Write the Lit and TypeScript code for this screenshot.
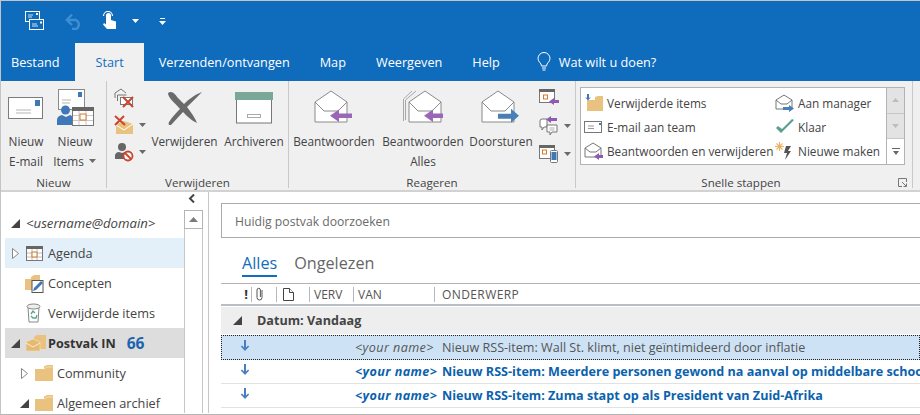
import {html, css, svg, LitElement} from 'lit';
import {customElement} from 'lit/decorators.js';

const caret = html`<svg class="caret" width="8" height="4" viewBox="0 0 8 4"><path d="M0 0h7L3.5 4z" fill="#6a6a6a"/></svg>`;

const folder = (w = 18, h = 16) => svg`<svg width=${w} height=${h} viewBox="0 0 18 16"><path d="M0 4h9V1.500L12 0h6v16H0z" fill="#eac27f"/><path d="M9 4l3-2h6" fill="none" stroke="#f6e3bf" stroke-width=".8"/></svg>`;

const openEnv = (arrow: string, dir: 'l' | 'r', double = false) => html`<svg width="40" height="36" viewBox="0 0 40 36">
  ${double ? svg`<path d="M0.500 31V9L9 1" fill="none" stroke="#a8a8a8"/><path d="M2.500 30V10L13 1" fill="none" stroke="#a8a8a8"/>` : ''}
  <g transform=${double ? 'translate(5 0)' : ''}>
    <path d="M1 12L17 1l16 11v20H1z" fill="#fff" stroke="#8a8a8a"/>
    <path d="M1 12l9 9h14l9-9" fill="none" stroke="#8a8a8a"/>
    ${dir === 'l'
      ? svg`<path d="M18 28h20v-4.500H25v-4l-9 6.250 9 6.250v-4z" fill=${arrow}/>`
      : svg`<path d="M38 25.750l-8-7v5H17v5h13v4z" fill=${arrow}/>`}
  </g>
</svg>`;

const smallEnv = (arrow: string, dir: 'l' | 'r') => html`<svg width="20" height="19" viewBox="0 0 20 19">
  <path d="M1 6l8-5 8 5v9H1z" fill="#fff" stroke="#777"/><path d="M1 6l5 4h6l5-4" fill="none" stroke="#777"/>
  ${dir === 'l'
    ? svg`<path d="M10 14.500l5-3.500v2h4v3h-4v2z" fill=${arrow}/>`
    : svg`<path d="M19 14.500l-5-3.500v2H8v3h6v2z" fill=${arrow}/>`}
</svg>`;

const calendar = html`<svg width="17" height="15" viewBox="0 0 17 15"><rect x=".5" y=".5" width="16" height="14" fill="#fff" stroke="#777"/><rect x="0" y="0" width="17" height="3" fill="#666"/><path d="M6 3v11M11 3v11M1 7h15M1 11h15" stroke="#bbb"/><rect x="6" y="6" width="5" height="5" fill="#fff" stroke="#d8792a"/></svg>`;

const downArrow = html`<svg width="10" height="12" viewBox="0 0 10 12"><path d="M5 11L.8 6.500l1.200-1L4 7.500V0h2v7.500l2-2 1.200 1z" fill="#4a7fbf"/></svg>`;

const triOpen = html`<svg class="tri" width="9" height="9" viewBox="0 0 9 9"><path d="M9 0v9H0z" fill="#444"/></svg>`;
const triClosed = html`<svg class="tri" width="7" height="11" viewBox="0 0 7 11"><path d="M.5.500l6 5-6 5z" fill="#fff" stroke="#888"/></svg>`;

@customElement('app-root')
export class AppRoot extends LitElement {
  static styles = css`
    :host {
      display: block;
      width: 920px;
      height: 415px;
      overflow: hidden;
      background: #fff;
      font-family: "Open Sans", "Noto Sans", sans-serif;
      font-size: 13px;
      color: #444;
      box-sizing: border-box;
      border-left: 1px solid #c4c4c4;
      border-top: 1px solid #c4c4c4;
      border-bottom: 1px solid #b5b5b5;
    }
    svg { display: block; flex: none; }

    /* title + tabs */
    .top { background: #0f6cbd; height: 80px; display: flex; flex-direction: column; }
    .qat { height: 42px; display: flex; align-items: center; padding: 0 0 2px 24px; box-sizing: border-box; }
    .qat .undo { margin-left: 20px; }
    .qat .touch { margin-left: 19px; }
    .qat .drop { margin-left: 15px; }
    .qat .more { margin-left: 20px; }
    .tabs { height: 38px; display: flex; color: #fff; font-size: 12.7px; }
    .tab { padding: 0 15px; display: flex; align-items: center; white-space: nowrap; }
    .tab.file { padding: 0 16px 0 10px; }
    .tab.on { background: #f0f0f0; color: #106ebe; padding: 0 20px; }
    .tell { display: flex; align-items: center; gap: 7px; margin-left: 21px; }

    /* ribbon */
    .ribbon { height: 111px; background: #f0f0f0; border-bottom: 2px solid #d2d2d2; display: flex; box-sizing: border-box; }
    .group { display: flex; flex-direction: column; flex: none; padding-top: 4px; box-sizing: border-box; border-right: 1px solid #c8c8c8; margin-bottom: 2px; }
    .g1 { width: 106px; }
    .g2 { width: 182px; }
    .g3 { width: 287px; }
    .g4 { flex: 1; margin-right: 7px; position: relative; }
    .btns { flex: 1; display: flex; }
    .g1 .btns { padding-left: 4px; gap: 4px; }
    .g2 .btns { padding-left: 7px; }
    .g3 .btns { padding-left: 4px; }
    .big { display: flex; flex-direction: column; align-items: center; line-height: 20px; white-space: nowrap; font-size: 11.8px; }
    .big .ico { height: 46px; display: flex; align-items: center; justify-content: center; }
    .big .ln { display: flex; align-items: center; gap: 5px; }
    .glabel { height: 10px; text-align: center; line-height: 10px; font-size: 11.6px; }
    .stack { display: flex; flex-direction: column; gap: 7px; padding-top: 3px; }
    .stack .it { display: flex; align-items: center; gap: 5px; height: 20px; }
    .g2 .stack { width: 34px; }
    .g3 .stack { margin-left: 7px; gap: 8px; }

    .steps { display: flex; margin: 2px 0 0 4px; height: 78px; width: 325px; flex: none; }
    .steps .box { flex: 1; border: 1px solid #b3b3b3; background: #fff; display: grid; grid-template-columns: 191px 1fr; grid-auto-rows: 24px; padding: 3px 0 0 3px; box-sizing: border-box; font-size: 11.8px; }
    .step { display: flex; align-items: center; gap: 3px; white-space: nowrap; }
    .scroll3 { width: 18px; display: flex; flex-direction: column; border: 1px solid #b3b3b3; border-left: none; box-sizing: border-box; }
    .scroll3 div { flex: 1; display: flex; align-items: center; justify-content: center; background: #e3e3e3; border-bottom: 1px solid #c8c8c8; }
    .scroll3 div:last-child { background: #fff; border-bottom: none; }
    .g4 .glabel { padding-right: 6px; }
    .launcher { position: absolute; right: 5px; bottom: 1px; }

    /* body */
    .body { display: flex; height: 221px; }
    .nav { width: 183px; flex: none; padding: 16px 0 0 4px; box-sizing: border-box; }
    .row { height: 30px; display: flex; align-items: center; font-size: 12.7px; white-space: nowrap; }
    .row .tw { width: 21px; display: flex; justify-content: center; flex: none; }
    .row.sub { padding-left: 9px; }
    .row .label { margin-left: 4px; }
    .row.plain { padding-left: 20px; }
    .row.agenda { background: #e3f0f9; }
    .row.agenda .label { margin-left: 5px; }
    .row.inbox { background: #dddddd; color: #333; font-weight: 700; font-size: 12.6px; }
    .row.inbox .label { margin-left: 2px; }
    .row.inbox .n { color: #1b63ae; margin-left: 11px; font-size: 15.5px; }
    .row.acct { font-style: italic; font-size: 13.2px; }
    .sbar { width: 25px; flex: none; display: flex; flex-direction: column; align-items: flex-start; border-right: 1px solid #c6c6c6; box-sizing: border-box; }
    .sbar .chev { height: 16px; margin: 2px 0 0 4px; }
    .sbar .up { width: 19px; height: 19px; border: 1px solid #b5b5b5; box-sizing: border-box; display: flex; align-items: center; justify-content: center; margin-top: 0; }
    .sbar .track { width: 19px; flex: 1; border: 1px solid #c6c6c6; border-top: none; border-bottom: none; box-sizing: border-box; }

    .main { flex: 1; min-width: 0; padding: 11px 0 0 12px; }
    .search { height: 35px; border: 1px solid #ababab; border-right: none; display: flex; align-items: center; padding: 1px 0 0 13px; color: #6a6a6a; font-size: 12.2px; box-sizing: border-box; }
    .views { display: flex; gap: 17px; height: 46px; padding: 14px 0 0 21px; box-sizing: border-box; font-size: 16.2px; color: #666; border-bottom: 1px solid #b4b4b4; }
    .views span { height: 25px; line-height: 22px; }
    .views .on { color: #106ebe; border-bottom: 2px solid #106ebe; box-sizing: border-box; }
    .cols { display: grid; grid-template-columns: 31px 25px 33px 44px 81px 1fr; height: 20px; align-items: center; font-size: 12px; color: #555; border-bottom: 2px solid #b9bdc4; box-sizing: content-box; }
    .cols > div { height: 15px; display: flex; align-items: center; padding-left: 4px; box-sizing: border-box; border-right: 1px solid #b4b8c0; white-space: nowrap; }
    .cols > div:last-child { border-right: none; padding-left: 7px; letter-spacing: .4px; }
    .cols .bang { justify-content: flex-end; padding-right: 3px; font-weight: 700; color: #333; font-size: 13px; }
    .cols .clip { padding-left: 2px; }
    .cols .doc { padding-left: 6px; }
    .grp { height: 27px; margin-top: 1px; background: #eeeeee; display: flex; align-items: center; padding-left: 12px; gap: 15px; font-weight: 700; font-size: 12.6px; color: #444; }
    .msg { height: 24px; display: grid; grid-template-columns: 221px 1fr; border-bottom: 1px solid #e2e2e2; box-sizing: border-box; white-space: nowrap; font-size: 12.6px; align-items: center; }
    .msg .flag { display: flex; padding-left: 19px; margin-top: -4px; width: 10px; flex: none; }
    .msg .cell1 { display: flex; align-items: center; }
    .msg.sel { height: 25px; margin-top: 1px; background: #cde3f5; outline: 1px dotted #222; outline-offset: -1px; border-bottom: none; color: #555; }
    .msg.un { color: #0b62ad; font-weight: 700; }
    .who { padding-left: 105px; font-style: italic; letter-spacing: .4px; }
  `;

  render() {
    return html`
      <div class="top">
        <div class="qat">
          <svg width="20" height="20" viewBox="0 0 20 20" fill="none" stroke="#fff"><rect x=".5" y=".5" width="14" height="10"/><rect x="4.500" y="8.500" width="14" height="10" fill="#0f6cbd"/><path d="M7 13h5M7 15h6" stroke-width=".8"/><path d="M3 4h5M3 6h4" stroke-width=".8"/><rect x="15" y="10.500" width="2" height="2" fill="#fff" stroke="none"/><rect x="11" y="2" width="2" height="2" fill="#fff" stroke="none"/></svg>
          <svg class="undo" width="18" height="17" viewBox="0 0 18 17" fill="none" stroke="#3f8ed2" stroke-width="2.400"><path d="M2 7h9a5 5 0 0 1 0 9H7"/><path d="M7 1.500L1.800 7 7 12" /></svg>
          <svg class="touch" width="15" height="20" viewBox="0 0 15 20"><path d="M4 4.500a2.500 2.500 0 0 1 5 0V9l5 1.500V18H5L1 13.500l1-1.500 2 1.500z" fill="#fff"/><path d="M1.500 5a4.500 4.500 0 0 1 9 0" fill="none" stroke="#fff" stroke-width="1.200"/></svg>
          <svg class="drop" width="7" height="4" viewBox="0 0 7 4"><path d="M0 0h7L3.500 4z" fill="#fff"/></svg>
          <svg class="more" width="7" height="7" viewBox="0 0 7 7"><path d="M1 0h5v1H1zM0 3h7L3.500 7z" fill="#fff"/></svg>
        </div>
        <div class="tabs">
          <div class="tab file">Bestand</div>
          <div class="tab on">Start</div>
          <div class="tab">Verzenden/ontvangen</div>
          <div class="tab">Map</div>
          <div class="tab">Weergeven</div>
          <div class="tab">Help</div>
          <div class="tell">
            <svg width="16" height="20" viewBox="0 0 16 20" fill="none" stroke="#fff"><path d="M5.500 14c0-3-3.500-4-3.500-7.500a6 6 0 0 1 12 0C14 10 10.500 11 10.500 14z"/><path d="M6 16h4M6.500 18h3"/></svg>
            <span>Wat wilt u doen?</span>
          </div>
        </div>
      </div>

      <div class="ribbon">
        <div class="group g1">
          <div class="btns">
            <div class="big" style="width:42px">
              <div class="ico"><svg width="36" height="22" viewBox="0 0 36 22"><rect x=".5" y=".5" width="34" height="21" fill="#fff" stroke="#7b7b7b"/><rect x="27" y="3" width="5" height="6" fill="#3f78b8"/><path d="M8 13h15M8 16h15" stroke="#b5b5b5"/></svg></div>
              <span>Nieuw</span><span>E-mail</span>
            </div>
            <div class="big" style="width:48px">
              <div class="ico"><svg width="38" height="38" viewBox="0 0 38 38"><rect x="2.500" y=".5" width="26" height="20" fill="#fff" stroke="#8a8a8a"/><rect x="22" y="3" width="4" height="5" fill="#3f78b8"/><path d="M6 11h9M6 14h8" stroke="#b5b5b5"/><circle cx="9.500" cy="21" r="4.500" fill="#3f78b8"/><path d="M1 36v-5q0-4 5-5l4 2 4-2q3 1 4 3v7z" fill="#3f78b8"/><rect x="16.500" y="18.500" width="21" height="18" fill="#fff" stroke="#777"/><rect x="16" y="18" width="22" height="4" fill="#666"/><path d="M23 22v14M30 22v14M17 26.500h20M17 31.500h20" stroke="#c8c8c8"/><rect x="24" y="25" width="6" height="6" fill="#fff" stroke="#d8792a"/></svg></div>
              <span>Nieuw</span><span class="ln">Items ${caret}</span>
            </div>
          </div>
          <div class="glabel">Nieuw</div>
        </div>

        <div class="group g2">
          <div class="btns">
            <div class="stack">
              <div class="it"><svg width="20" height="20" viewBox="0 0 20 20" fill="none"><path d="M1 10V5l6-4 5 4" stroke="#777"/><path d="M3.500 13V7h9" stroke="#777"/><rect x="6.500" y="9.500" width="12" height="7" fill="#fff" stroke="#777"/><path d="M9 9l10 10M19 9L9 19" stroke="#c9452f" stroke-width="2"/></svg></div>
              <div class="it"><svg width="20" height="20" viewBox="0 0 20 20"><path d="M2 9l8-3 9 3v10H2z" fill="#eac27f"/><path d="M2 10l8 5 9-6" fill="none" stroke="#fff"/><path d="M1 1l10 9M10 1L1 10" stroke="#c9452f" stroke-width="2"/></svg>${caret}</div>
              <div class="it"><svg width="20" height="20" viewBox="0 0 20 20"><circle cx="8" cy="5" r="4" fill="#666"/><path d="M1 17v-4q1-3 4-3l3 1 3-1 2 1-3 6z" fill="#666"/><circle cx="14" cy="14" r="4.500" fill="#fff" stroke="#c9452f" stroke-width="1.800"/><path d="M11 11l6 6" stroke="#c9452f" stroke-width="1.800"/></svg>${caret}</div>
            </div>
            <div class="big" style="width:73px">
              <div class="ico"><svg width="36" height="34" viewBox="0 0 36 34"><path d="M1 2c4-3 7 1 10 5l6 6c4-4 10-9 18-12-5 5-11 11-15 15 4 5 8 11 10 16-5-2-10-7-14-11-4 4-8 9-12 13-2 1-3-1-2-3 3-5 7-9 11-13-4-5-12-11-12-16z" fill="#6a6a6a"/></svg></div>
              <span>Verwijderen</span>
            </div>
            <div class="big" style="width:58px;margin-left:4px">
              <div class="ico"><svg width="38" height="32" viewBox="0 0 38 32"><rect x="1.500" y="1" width="35" height="30" fill="#fff" stroke="#777"/><rect x="0" y="0" width="38" height="8" fill="#7aa897"/><rect x="12.500" y="22.500" width="13" height="3" fill="#fff" stroke="#aaa"/></svg></div>
              <span>Archiveren</span>
            </div>
          </div>
          <div class="glabel">Verwijderen</div>
        </div>

        <div class="group g3">
          <div class="btns">
            <div class="big" style="width:82px"><div class="ico">${openEnv('#9a67b6', 'l')}</div><span>Beantwoorden</span></div>
            <div class="big" style="width:82px;margin-left:7px"><div class="ico">${openEnv('#9a67b6', 'l', true)}</div><span>Beantwoorden</span><span>Alles</span></div>
            <div class="big" style="width:62px;margin-left:6px"><div class="ico">${openEnv('#4a7fb5', 'r')}</div><span>Doorsturen</span></div>
            <div class="stack">
              <div class="it"><svg width="20" height="18" viewBox="0 0 20 18"><rect x=".5" y=".5" width="15" height="13" fill="#fff" stroke="#777"/><rect width="16" height="3" fill="#666"/><rect x="4.500" y="6" width="4" height="4" fill="#fff" stroke="#d8792a"/><path d="M10 12.500l5-3.500v2h5v3h-5v2z" fill="#8f5bb0"/></svg></div>
              <div class="it"><svg width="20" height="20" viewBox="0 0 20 20"><path d="M1 5q0-2 2-2h5v8H5l-2 3v-3H1z" fill="#fff" stroke="#777"/><path d="M8 9h10v7h-5l-2 3v-3H8z" fill="#fff" stroke="#777"/><path d="M10.500 12h5M10.500 14h5" stroke="#999" stroke-width=".8"/><path d="M7 3.500L12 0v2h6v3h-6v2z" fill="#8f5bb0"/></svg>${caret}</div>
              <div class="it"><svg width="20" height="18" viewBox="0 0 20 18"><rect x=".5" y=".5" width="15" height="13" fill="#fff" stroke="#777"/><rect width="16" height="3" fill="#666"/><rect x="3.500" y="5" width="4" height="4" fill="#fff" stroke="#d8792a"/><rect x="11.500" y="5.500" width="7" height="12" rx="1" fill="#fff" stroke="#777"/><rect x="12.500" y="7" width="5" height="8" fill="#3f78b8"/></svg>${caret}</div>
            </div>
          </div>
          <div class="glabel">Reageren</div>
        </div>

        <div class="group g4">
          <div class="btns">
            <div class="steps">
              <div class="box">
                <div class="step"><svg width="20" height="18" viewBox="0 0 20 18"><path d="M3 6h8V3l3-1h5v15H3z" fill="#eac27f"/><path d="M3 0v4l-2-1 3 3.500L7 3l-2 1V0z" fill="#3f78b8"/></svg>Verwijderde items</div>
                <div class="step">${smallEnv('#4a7fb5', 'r')}Aan manager</div>
                <div class="step"><svg width="20" height="12" viewBox="0 0 20 12"><rect x=".5" y=".5" width="17" height="11" fill="#fff" stroke="#777"/><rect x="15" y="2" width="2" height="2" fill="#3f78b8"/><path d="M4 5h6M4 7.500h6" stroke="#999"/></svg>E-mail aan team</div>
                <div class="step"><svg width="20" height="16" viewBox="0 0 20 16"><path d="M1 9l5 5 13-13-2-1L7 10 3 7z" fill="#5c9f8f"/></svg>Klaar</div>
                <div class="step">${smallEnv('#8f5bb0', 'l')}Beantwoorden en verwijderen</div>
                <div class="step"><svg width="20" height="18" viewBox="0 0 20 18"><path d="M4.500 0v9M0 4.500h9M1.500 1.500l6 6M7.500 1.500l-6 6" stroke="#e8b360" stroke-width="1.100"/><path d="M11 4h5l-3 5h3l-6 9 2-7H9z" fill="#555"/></svg>Nieuwe maken</div>
              </div>
              <div class="scroll3">
                <div><svg width="7" height="4" viewBox="0 0 7 4"><path d="M0 4h7L3.500 0z" fill="#bdbdbd"/></svg></div>
                <div><svg width="7" height="4" viewBox="0 0 7 4"><path d="M0 0h7L3.500 4z" fill="#bdbdbd"/></svg></div>
                <div><svg width="8" height="7" viewBox="0 0 8 7"><path d="M0 0h8v1H0zM1 3h6L4 7z" fill="#666"/></svg></div>
              </div>
            </div>
          </div>
          <div class="glabel">Snelle stappen</div>
          <svg class="launcher" width="9" height="9" viewBox="0 0 9 9" fill="none" stroke="#777"><path d="M8.500 4V.5H.5v8H4"/><path d="M4 4l4 4M8.500 5.500v3h-3"/></svg>
        </div>
      </div>

      <div class="body">
        <div class="nav">
          <div class="row acct"><span class="tw">${triOpen}</span><span>&lt;username@domain&gt;</span></div>
          <div class="row agenda"><span class="tw">${triClosed}</span>${calendar}<span class="label">Agenda</span></div>
          <div class="row plain">
            <svg width="19" height="19" viewBox="0 0 19 19"><path d="M0 5h6V3l3-2h6v15H0z" fill="#eac27f"/><rect x="7" y="6.500" width="11" height="12" fill="#fff" stroke="#555"/><path d="M8 17l1-3 7-7 2 2-7 7z" fill="#3f78b8"/></svg>
            <span class="label">Concepten</span>
          </div>
          <div class="row plain">
            <svg width="19" height="20" viewBox="0 0 19 20"><path d="M3 4l1 15h9l1-15z" fill="#fff" stroke="#888"/><ellipse cx="8.500" cy="3.500" rx="6.500" ry="2.500" fill="#eee" stroke="#888"/><path d="M6 11l2-3 2 2M6 13l2 2h3l1-3" fill="none" stroke="#5aa58f" stroke-width="1.400"/></svg>
            <span class="label">Verwijderde items</span>
          </div>
          <div class="row inbox"><span class="tw">${triOpen}</span><svg width="20" height="16" viewBox="0 0 20 16"><path d="M8 5V2l3-2h9v14H8z" fill="#eac27f"/><path d="M0 7l7-3 7 3v9H0z" fill="#e6b971" stroke="#f5e3bf" stroke-width=".6"/><path d="M0 8l7 4 7-4" fill="none" stroke="#f8ecd3"/></svg><span class="label">Postvak IN</span><span class="n">66</span></div>
          <div class="row sub"><span class="tw">${triClosed}</span>${folder()}<span class="label">Community</span></div>
          <div class="row sub"><span class="tw">${triOpen}</span>${folder()}<span class="label">Algemeen archief</span></div>
        </div>
        <div class="sbar">
          <div class="chev"><svg width="7" height="9" viewBox="0 0 7 9"><path d="M6 .5L2 4.500l4 4" fill="none" stroke="#444" stroke-width="2"/></svg></div>
          <div class="up"><svg width="9" height="5" viewBox="0 0 9 5"><path d="M0 5h9L4.500 0z" fill="#7a7a7a"/></svg></div>
          <div class="track"></div>
        </div>
        <div class="main">
          <div class="search">Huidig postvak doorzoeken</div>
          <div class="views"><span class="on">Alles</span><span>Ongelezen</span></div>
          <div class="cols">
            <div class="bang">!</div>
            <div class="clip"><svg width="11" height="14" viewBox="0 0 11 14" fill="none" stroke="#555"><path d="M8 3v7.500a2.500 2.500 0 0 1-5 0V3a1.700 1.700 0 0 1 3.400 0v7"/></svg></div>
            <div class="doc"><svg width="11" height="13" viewBox="0 0 11 13" fill="#fff" stroke="#444"><path d="M.5.500h6l4 4v8H.5z"/><path d="M6.500.5v4h4"/></svg></div>
            <div>VERV</div>
            <div>VAN</div>
            <div>ONDERWERP</div>
          </div>
          <div class="grp">${triOpen}<span>Datum: Vandaag</span></div>
          <div class="msg sel"><span class="cell1"><span class="flag">${downArrow}</span><span class="who">&lt;your name&gt;</span></span><span>Nieuw RSS-item: Wall St. klimt, niet geïntimideerd door inflatie</span></div>
          <div class="msg un"><span class="cell1"><span class="flag">${downArrow}</span><span class="who">&lt;your name&gt;</span></span><span>Nieuw RSS-item: Meerdere personen gewond na aanval op middelbare school</span></div>
          <div class="msg un"><span class="cell1"><span class="flag">${downArrow}</span><span class="who">&lt;your name&gt;</span></span><span>Nieuw RSS-item: Zuma stapt op als President van Zuid-Afrika</span></div>
        </div>
      </div>
    `;
  }
}
